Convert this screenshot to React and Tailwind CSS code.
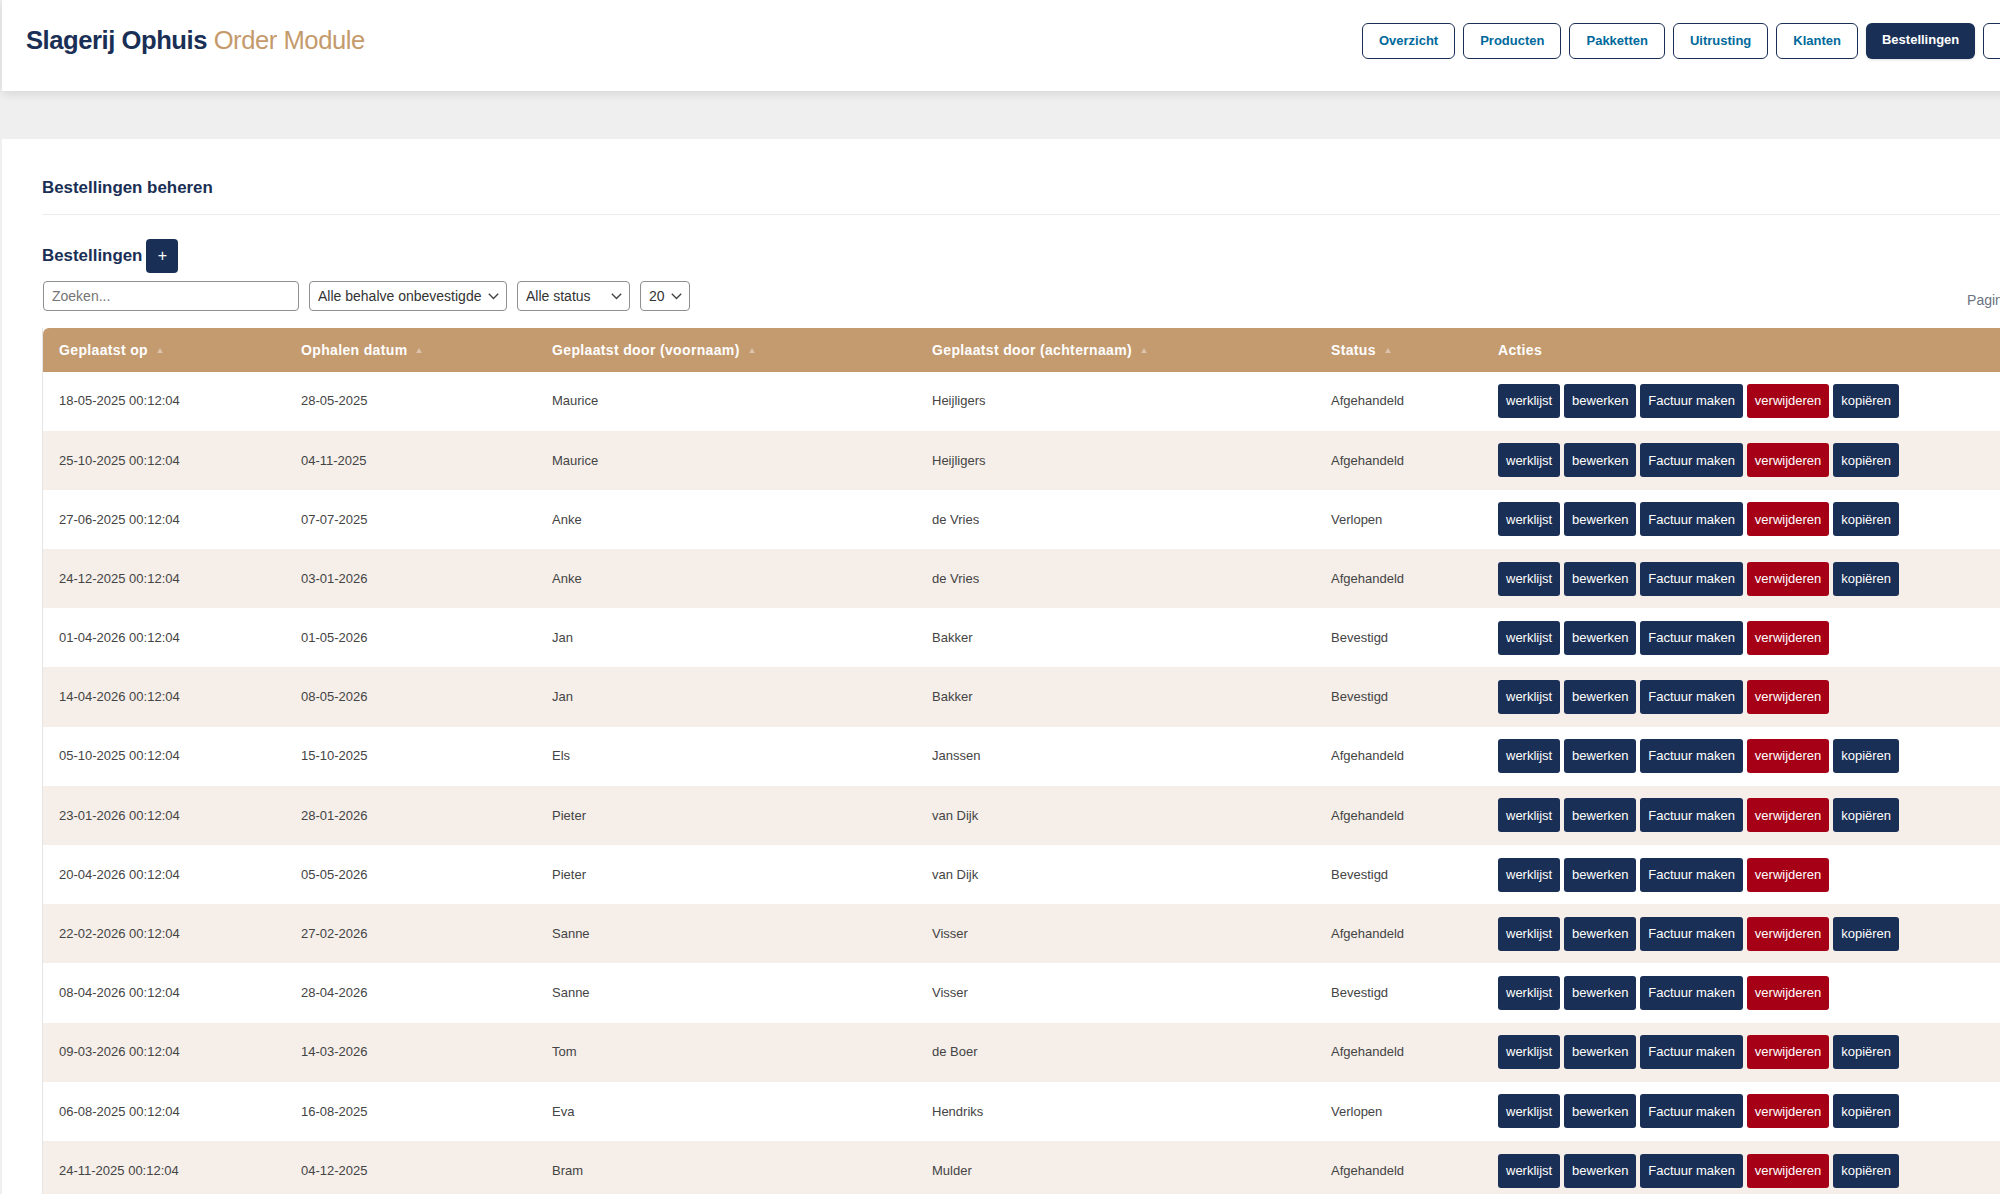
import React from 'react'

const navItems = ['Overzicht', 'Producten', 'Pakketten', 'Uitrusting', 'Klanten', 'Bestellingen', 'Instellingen']

const orders = [
  ['18-05-2025 00:12:04', '28-05-2025', 'Maurice', 'Heijligers', 'Afgehandeld'],
  ['25-10-2025 00:12:04', '04-11-2025', 'Maurice', 'Heijligers', 'Afgehandeld'],
  ['27-06-2025 00:12:04', '07-07-2025', 'Anke', 'de Vries', 'Verlopen'],
  ['24-12-2025 00:12:04', '03-01-2026', 'Anke', 'de Vries', 'Afgehandeld'],
  ['01-04-2026 00:12:04', '01-05-2026', 'Jan', 'Bakker', 'Bevestigd'],
  ['14-04-2026 00:12:04', '08-05-2026', 'Jan', 'Bakker', 'Bevestigd'],
  ['05-10-2025 00:12:04', '15-10-2025', 'Els', 'Janssen', 'Afgehandeld'],
  ['23-01-2026 00:12:04', '28-01-2026', 'Pieter', 'van Dijk', 'Afgehandeld'],
  ['20-04-2026 00:12:04', '05-05-2026', 'Pieter', 'van Dijk', 'Bevestigd'],
  ['22-02-2026 00:12:04', '27-02-2026', 'Sanne', 'Visser', 'Afgehandeld'],
  ['08-04-2026 00:12:04', '28-04-2026', 'Sanne', 'Visser', 'Bevestigd'],
  ['09-03-2026 00:12:04', '14-03-2026', 'Tom', 'de Boer', 'Afgehandeld'],
  ['06-08-2025 00:12:04', '16-08-2025', 'Eva', 'Hendriks', 'Verlopen'],
  ['24-11-2025 00:12:04', '04-12-2025', 'Bram', 'Mulder', 'Afgehandeld'],
]

const columns = [
  ['Geplaatst op', 'w-[242px]'],
  ['Ophalen datum', 'w-[251px]'],
  ['Geplaatst door (voornaam)', 'w-[380px]'],
  ['Geplaatst door (achternaam)', 'w-[399px]'],
  ['Status', 'w-[167px]'],
]

function ActionButton({ children, danger }) {
  return (
    <button className={`h-[34px] px-2 rounded-[3px] text-[13px] text-white whitespace-nowrap ${danger ? 'bg-[#a50016]' : 'bg-[#1a2f55]'}`}>
      {children}
    </button>
  )
}

function Select({ width, children }) {
  return (
    <div className={`relative ${width}`}>
      <select className="appearance-none w-full h-[30px] pl-2 text-sm border border-[#8f8f8f] rounded bg-white text-[#333]">
        {children}
      </select>
      <svg className="absolute right-[8px] top-[12px] pointer-events-none" width="11" height="7" viewBox="0 0 11 7" fill="none" stroke="#444" strokeWidth="1.4">
        <path d="M0.8 0.8 L5.5 5.5 L10.2 0.8" />
      </svg>
    </div>
  )
}

export default function App() {
  return (
    <div className="w-[2000px] h-[1194px] overflow-hidden bg-[#efefef] font-['Liberation_Sans',Arial,sans-serif] text-[#333]">
      <div className="w-[2111.5px] ml-[2px]">
        <header className="h-[91px] bg-white px-6 pb-[9px] flex items-center justify-between shadow-[0_2px_10px_rgba(0,0,0,0.12)] relative">
          <h1 className="text-[25.6px] font-bold tracking-[-0.45px] text-[#1a2f55] mb-[1px]">
            Slagerij Ophuis <span className="font-normal text-[#c49a6c]">Order Module</span>
          </h1>
          <nav className="flex gap-2">
            {navItems.map(item => (
              item === 'Bestellingen' ? (
                <a key={item} className="h-9 px-4 pb-[2px] rounded-md bg-[#1a2f55] text-white text-[13px] font-bold flex items-center shadow-sm">{item}</a>
              ) : (
                <a key={item} className="h-9 px-4 rounded-md border border-[#1a2f55] text-[#00699b] text-[13px] font-bold flex items-center">{item}</a>
              )
            ))}
          </nav>
        </header>

        <main className="mt-12 bg-white px-10 pt-[35px] h-[1100px]">
          <h2 className="text-[16.9px] font-bold text-[#1a2f55] leading-[28px] pb-[12px] border-b border-[#ececec]">Bestellingen beheren</h2>

          <div className="mt-[24px] flex items-center gap-1 h-[34px]">
            <h3 className="text-[16.9px] font-bold text-[#1a2f55]">Bestellingen</h3>
            <button className="w-8 h-[34px] rounded bg-[#1a2f55] text-white text-base">+</button>
          </div>

          <div className="mt-2 pl-px flex items-center justify-between">
            <div className="flex items-center gap-[10px]">
              <input placeholder="Zoeken..." className="w-[256px] h-[30px] px-2 text-sm border border-[#8f8f8f] rounded bg-white placeholder:text-[#757575]" />
              <Select width="w-[198px]"><option>Alle behalve onbevestigde</option></Select>
              <Select width="w-[113px]"><option>Alle status</option></Select>
              <Select width="w-[50px]"><option>20</option></Select>
            </div>
            <div className="mr-[13px] mt-2 text-sm text-[#6b7280]">Pagina 1 van 2</div>
          </div>

          <div className="mt-[17px] border-l border-[#e5e5e5]">
            <table className="w-full table-fixed border-collapse text-[13px] text-left">
              <thead>
                <tr className="h-[43.5px] bg-[#c49a6f] text-white">
                  {columns.map(([label, width], i) => (
                    <th key={label} className={`${width} pl-4 font-bold text-sm tracking-[0.35px] ${i === 0 ? 'rounded-tl-md' : ''}`}>
                      {label}
                      <span className="inline-block ml-[9px] mb-[1px] align-middle w-0 h-0 border-x-[3px] border-b-[5px] border-x-transparent border-b-white/40" />
                    </th>
                  ))}
                  <th className="pl-4 font-bold text-sm tracking-[0.35px]">Acties</th>
                </tr>
              </thead>
              <tbody>
                {orders.map((o, i) => (
                  <tr key={i} className={`h-[59.2px] ${i % 2 ? 'bg-[#f5eee9]' : 'bg-white'}`}>
                    {o.map((v, j) => <td key={j} className="pl-4 text-[#444]">{v}</td>)}
                    <td className="pl-4">
                      <div className="flex gap-[3.85px]">
                        <ActionButton>werklijst</ActionButton>
                        <ActionButton>bewerken</ActionButton>
                        <ActionButton>Factuur maken</ActionButton>
                        <ActionButton danger>verwijderen</ActionButton>
                        {o[4] !== 'Bevestigd' && <ActionButton>kopiëren</ActionButton>}
                      </div>
                    </td>
                  </tr>
                ))}
              </tbody>
            </table>
          </div>
        </main>
      </div>
    </div>
  )
}
